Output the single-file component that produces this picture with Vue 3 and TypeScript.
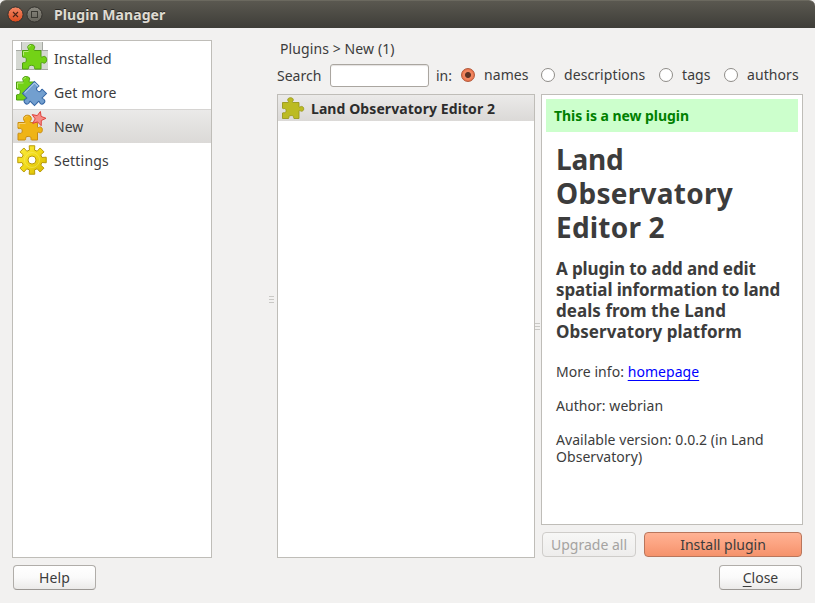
<script setup lang="ts">
import { ref } from 'vue'

type Section = 'Installed' | 'Get more' | 'New' | 'Settings'

const sections: { name: Section; cls: string }[] = [
  { name: 'Installed', cls: 's-installed' },
  { name: 'Get more', cls: 's-more' },
  { name: 'New', cls: 's-new' },
  { name: 'Settings', cls: 's-settings' },
]
const filters = ['names', 'descriptions', 'tags', 'authors']

const active = ref<Section>('New')
const filter = ref('names')
const query = ref('')

// Outline of an eight-toothed cog centred on (16, 16)
function cogPath(): string {
  const pts: string[] = []
  for (let i = 0; i < 8; i++) {
    const mid = i * 45 - 90
    const corners: [number, number][] = [[-14.5, 10.2], [-11, 14.5], [11, 14.5], [14.5, 10.2]]
    for (const [offset, r] of corners) {
      const a = ((mid + offset) * Math.PI) / 180
      pts.push(`${(16 + r * Math.cos(a)).toFixed(2)} ${(16 + r * Math.sin(a)).toFixed(2)}`)
    }
  }
  return `M${pts.join('L')}z`
}
const cog = cogPath()
</script>

<template>
  <div class="window">
    <header class="titlebar">
      <svg class="winbtns" width="44" height="28" viewBox="0 0 44 28">
        <defs>
          <linearGradient id="gclose" x1="0" y1="0" x2="0" y2="1">
            <stop offset="0" stop-color="#f58a68" />
            <stop offset="1" stop-color="#dc4a1c" />
          </linearGradient>
          <linearGradient id="gmax" x1="0" y1="0" x2="0" y2="1">
            <stop offset="0" stop-color="#8b8980" />
            <stop offset="1" stop-color="#65635b" />
          </linearGradient>
        </defs>
        <circle cx="15.5" cy="14.5" r="7.6" fill="url(#gclose)" stroke="#34322d" />
        <path d="M13 12l5 5M18 12l-5 5" stroke="#4a2417" stroke-width="1.1" />
        <circle cx="34.500" cy="14.5" r="7.6" fill="url(#gmax)" stroke="#34322d" />
        <rect x="31.5" y="11.5" width="6" height="6" fill="none" stroke="#3a3933" />
      </svg>
      <span class="title">Plugin Manager</span>
    </header>

    <main class="body">
      <nav class="sidebar">
        <div
          v-for="s in sections"
          :key="s.name"
          class="section"
          :class="[s.cls, { active: active === s.name }]"
          @click="active = s.name"
        >
          <svg v-if="s.name === 'Installed'" class="icon" viewBox="0 0 32 32">
            <path d="M5 0h21v8h6v20H0V8h5z" fill="#d5d8d2" />
            <path d="M5.500 0v8M26.500 0v8M0 8.500h32M0 27.500h32" stroke="#a5a8a2" fill="none" />
            <path
              d="M6.500 8.500H12c1-.8.300-1.600-.1-2.500C11.200 4 13 2.500 15.200 2.500S19.300 4 18.600 6c-.4.900-1.100 1.700-.1 2.500h6.500v6c.8.900 1.500.4 2.400 0 1.800-.7 3.300 1.100 3.300 3.300s-1.500 3.900-3.300 3.200c-.9-.4-1.600-.8-2.400 0v6h-6c-1.200-.6.100-2-.9-2.900-1.200-1-4-1-5.100 0-1 .9.400 2.300-.9 2.900H6.500v-6c.8-.8 1.800-.1 2.800-.6 1.400-.9 1.400-4.100 0-4.900-1-.5-2 .2-2.800-.6z"
              fill="#73d216" stroke="#4f9e12"
            />
            <path d="M7.500 13.500v-4h5M15 3.500c-1.500 0-2.400 1-2.300 2" stroke="#b7ee78" fill="none" />
          </svg>

          <svg v-else-if="s.name === 'Get more'" class="icon" viewBox="0 0 32 32">
            <path
              d="M.5 6H7c.8-.8-.3-2-.3-3C7 1.200 8.300.5 10.200.5s3.300.7 3.500 2.500c0 1-1 2.200-.3 3h5.100v18H.5v-5c1-1 2 0 3-.8 1.200-1.200 1-3.600 0-4.600-1-.7-2 .2-3-.6z"
              fill="#73d216" stroke="#4f9e12"
            />
            <path d="M1.500 12V7h6M10 1.600c-1.400 0-2.200.7-2.300 1.700" stroke="#b7ee78" fill="none" />
            <g transform="rotate(45 18.500 17.500)">
              <path
                d="M10 9h6.300c.7.700-.2 1.300-.2 2.300 0 1.400 1.100 2.200 2.500 2.200s2.500-.8 2.500-2.200c0-1-.9-1.600-.2-2.300H27v6.300c.7.700 1.400-.3 2.500-.3 1.500 0 2.500 1.200 2.500 2.700s-1 2.700-2.500 2.700c-1.100 0-1.800-1-2.500-.3V26h-6c-.7.700.3 1.400.3 2.500 0 1.500-1.200 2.500-2.700 2.500s-2.700-1-2.700-2.500c0-1.100 1-1.800.3-2.500H10z"
                fill="#729fcf" stroke="#3465a4"
              />
              <path d="M11 24V10h5" stroke="#b4d0ee" fill="none" />
            </g>
          </svg>

          <svg v-else-if="s.name === 'New'" class="icon" viewBox="0 0 32 32">
            <path
              d="M2 12.500h6.500c1-1-1.200-2-1-4 .2-2.300 2-3.300 3.900-3.300s3.700 1 3.900 3.300c.2 2-2 3-1 4h7.200v4.700c1 1 1.800-.3 3-.2 1.500.2 2 1.800 1.800 3.400-.2 1.700-1.200 2.600-2.700 2.300-.8-.2-1.300-.8-2.100-.2V30h-6c-1.200-.7.200-2-.9-2.900-1.200-.9-3.500-.9-4.600 0-1.100.9.400 2.200-.9 2.900H2v-6.500c1-.8 2 .2 3.200-.3 1.400-.8 1.400-3.700 0-4.500-1.200-.6-2.200.4-3.200-.4z"
              fill="#efb416" stroke="#c88b10"
            />
            <path d="M3 17v-3.500h6.500M11.400 6.300c-1.600 0-2.800.8-2.900 2.200" stroke="#f7d06a" fill="none" />
            <path
              d="M24.400 1.500L25.100 6.400 30 8.300 25.300 10.500 25.200 15.700 21.600 11.900 16.700 13.400 19.200 8.900 16.200 4.600 21.300 5.600z"
              fill="#f58d87" stroke="#e0423c" stroke-linejoin="round"
            />
          </svg>

          <svg v-else class="icon" viewBox="0 0 32 32">
            <defs>
              <linearGradient id="ggear" x1="0" y1="0" x2="1" y2="1">
                <stop offset="0" stop-color="#fcee45" />
                <stop offset=".5" stop-color="#f0d916" />
                <stop offset="1" stop-color="#d3b400" />
              </linearGradient>
            </defs>
            <path :d="cog" fill="url(#ggear)" stroke="#b89a08" stroke-linejoin="round" />
            <circle cx="16" cy="16" r="7.500" fill="none" stroke="#f9ec78" stroke-width=".8" opacity=".6" />
            <circle cx="16" cy="16" r="4" fill="#fff" stroke="#b89a08" />
          </svg>
          <span>{{ s.name }}</span>
        </div>
      </nav>

      <svg class="grip" width="5" height="8" viewBox="0 0 5 8">
        <path d="M0 .5h5M0 3.500h5M0 6.500h5" stroke="#c9c8c5" />
      </svg>

      <section class="content">
        <div class="crumb">Plugins &gt; New (1)</div>
        <div class="search">
          <label class="lab" for="query">Search</label>
          <input id="query" v-model="query" class="field" type="text" />
          <span class="in">in:</span>
          <span v-for="f in filters" :key="f" class="opt" :class="'o-' + f" @click="filter = f">
            <i class="radio" :class="{ on: filter === f }"></i>
            <span class="olabel">{{ f }}</span>
          </span>
        </div>

        <div class="panes">
          <div class="list">
            <div class="row">
              <svg width="24" height="24" viewBox="0 0 24 24">
                <path
                  d="M1.500 6.500h5.800c.8-.9-.6-1.600-.6-2.600C6.800 2.400 8 1.700 9.500 1.700s2.700.7 2.800 2.200c0 1-1.400 1.700-.6 2.600h6.300v4.300c.9.800 1.300-.4 2.500-.4 1.500.1 2.200 1 2.200 2.400s-.7 2.300-2.200 2.400c-1.200 0-1.600-1.200-2.500-.4v7.700h-5c-1-.6.200-1.600-.7-2.400-1-.7-3.200-.7-4.100 0-.9.800.3 1.800-.7 2.400h-6v-5.500c.9-.8 1.700.1 2.700-.4 1.200-.8 1.200-3.100 0-3.900-1-.5-1.800.4-2.700-.4z"
                  fill="#bcbb22" stroke="#99981c" stroke-width=".9"
                />
              </svg>
              <span>Land Observatory Editor 2</span>
            </div>
          </div>

          <svg class="grip2" width="5" height="8" viewBox="0 0 5 8">
            <path d="M0 .5h5M0 3.500h5M0 6.500h5" stroke="#c9c8c5" />
          </svg>

          <div class="detail">
            <article class="info">
              <div class="banner">This is a new plugin</div>
              <h1>
                <span class="h1a">Land</span>
                <span class="h1b">Observatory</span>
                <span class="h1c">Editor 2</span>
              </h1>
              <h3>
                <span class="tight">A plugin to add and edit</span>
                <span class="tight">spatial information to land</span>
                <span class="loose">deals from the Land</span>
                <span class="loose">Observatory platform</span>
              </h3>
              <p class="more">More info: <a>homepage</a></p>
              <p class="author">Author: webrian</p>
              <p class="version"><span>Available version: 0.0.2 (in Land</span><span>Observatory)</span></p>
            </article>
            <div class="actions">
              <button class="btn upgrade" disabled>Upgrade all</button>
              <button class="btn install">Install plugin</button>
            </div>
          </div>
        </div>
      </section>
    </main>

    <footer class="footer">
      <button class="btn help">Help</button>
      <button class="btn close"><u>C</u>lose</button>
    </footer>
  </div>
</template>

<style>
body { margin: 0; background: #f2f1f0; }
</style>

<style scoped>
* { box-sizing: border-box; }
.window {
  width: 815px; height: 603px; overflow: hidden;
  background: #f2f1f0; color: #3c3c3c;
  font: 14px/17px "Noto Sans", sans-serif;
  white-space: nowrap;
}
.titlebar {
  height: 28px; display: flex; align-items: center;
  background: linear-gradient(#5a5850, #3e3d38);
  border-radius: 6px 6px 0 0; border-top: 1px solid #6b695f;
  color: #dfdbd2; font-weight: 700; letter-spacing: .08px;
}
.winbtns { display: block; margin-top: -1px; }
.title { margin-left: 10px; text-shadow: 0 -1px #2b2a26; }
.body { display: flex; height: 530px; padding: 12px 12px 0; }
.sidebar { width: 200px; height: 518px; background: #fff; border: 1px solid #bfbdb8; flex: none; }
.section { height: 34px; display: flex; align-items: center; padding-left: 3px; gap: 6px; }
.section.active {
  background: linear-gradient(#ebeae9, #dbd9d7);
  box-shadow: inset 0 1px #d6d4d2;
}
.icon { width: 32px; height: 32px; flex: none; }
.section span { padding-top: 1px; }
.s-installed span, .s-more span { letter-spacing: .1px; }
.s-settings span { letter-spacing: .22px; }
.grip { flex: none; margin: 256px 3px 0 57px; }
.content { width: 526px; flex: none; }
.crumb { height: 20px; padding: 0 0 0 3px; line-height: 18px; letter-spacing: .1px; }
.search { height: 30px; display: flex; align-items: center; margin-bottom: 4px; }
.lab { width: 53px; }
.field {
  width: 99px; height: 23px; padding: 0 4px; background: #fff; font: inherit; outline: none;
  border: 1px solid #aaa6a0; border-radius: 3px; box-shadow: inset 0 1px 1px #e4e2e0;
}
.in { margin-left: 7px; width: 25px; }
.opt { display: flex; align-items: center; }
.olabel { position: relative; top: -.5px; letter-spacing: .08px; }
.o-names { width: 80px; }
.o-descriptions { width: 118px; }
.o-tags { width: 65px; }
.radio {
  width: 14px; height: 14px; border-radius: 50%; border: 1px solid #8f8c88;
  background: #fff; flex: none; margin-right: 9px;
}
.radio.on {
  border-color: #b2593a;
  background: radial-gradient(circle, #5c3224 0 2.500px, #f0855f 3.500px 4.500px, #e96f48 6px);
}
.panes { display: flex; }
.list { width: 258px; height: 464px; flex: none; background: #fff; border: 1px solid #bfbdb8; }
.row {
  height: 26px; display: flex; align-items: center; padding-left: 3px; gap: 6px;
  background: linear-gradient(#ebeae9, #dbd9d7); font-weight: 700; color: #2c2c2c;
  letter-spacing: .08px;
}
.row span { padding-top: 1px; }
.grip2 { flex: none; margin: 229px 1px 0 0; }
.detail { width: 262px; flex: none; }
.info { height: 431px; background: #fff; border: 1px solid #bfbdb8; padding: 4px; }
.banner {
  height: 33px; background: #ccffcc; color: #008000; font-weight: 700;
  padding: 8px 8px 0; letter-spacing: -.05px;
}
h1 { margin: 10px 0 0 10px; font-size: 28px; line-height: 34px; font-weight: 700; }
h1 span, h3 span, .version span { display: block; }
.h1a { letter-spacing: -.2px; }
.h1b { letter-spacing: .27px; }
.h1c { letter-spacing: .2px; }
h3 { margin: 14px 0 0 10px; font-size: 17px; line-height: 21px; font-weight: 700; }
.tight { letter-spacing: -.12px; }
.loose { letter-spacing: .05px; }
p { margin: 17px 0 0 10px; letter-spacing: .05px; }
.more { margin-top: 21px; }
a { color: #0000ff; text-decoration: underline; text-underline-offset: 3px; }
.actions { display: flex; justify-content: space-between; padding: 7px 1px 0; }
.btn {
  height: 25px; padding: 0; font: inherit; color: #3c3c3c; border: 1px solid #b0ada9; border-bottom-color: #9b9894;
  border-radius: 4px; background: linear-gradient(#fff, #fafafa 50%, #ebeae9);
}
.upgrade { width: 94px; color: #a5a3a1; border-color: #cfcdca; background: linear-gradient(#f7f7f6, #eeedec); }
.install { width: 158px; border-color: #b9765c; background: linear-gradient(#ffb294, #fca482 45%, #f5926b); }
.footer { display: flex; justify-content: space-between; padding: 7px 13px 0; }
.help, .close { width: 83px; }
.help { letter-spacing: .1px; }
u { text-underline-offset: 3px; }
</style>
